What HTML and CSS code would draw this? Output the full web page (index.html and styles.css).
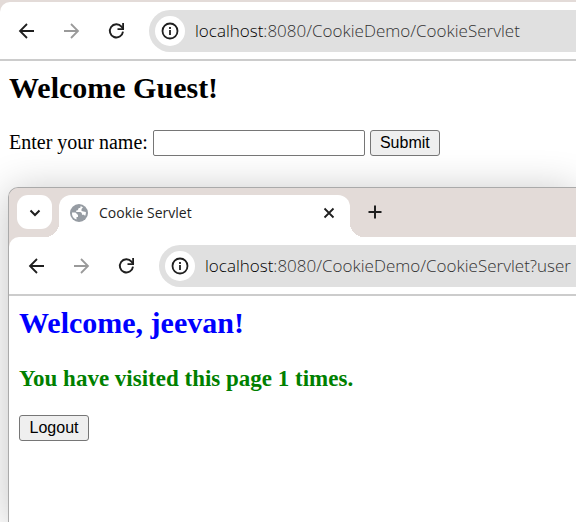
FILE: index.html
```html
<!DOCTYPE html>
<html lang="en">
<head>
<meta charset="utf-8">
<title>Cookie Servlet</title>
<link rel="stylesheet" href="styles.css">
</head>
<body>
<svg class="sprite" aria-hidden="true">
  <symbol id="back" viewBox="0 0 18 18"><path d="M16 9H2M9 2L2 9l7 7" fill="none" stroke="currentColor" stroke-width="1.800"/></symbol>
  <symbol id="forward" viewBox="0 0 18 18"><path d="M1 9h14M8 2l7 7-7 7" fill="none" stroke="currentColor" stroke-width="1.800"/></symbol>
  <symbol id="reload" viewBox="0 0 18 18"><path d="M15 9.700A6.600 6.600 0 1 1 13.500 4.600L15.500 7" fill="none" stroke="currentColor" stroke-width="1.900"/><path d="M16 1v7H9.500V6.200H14.200V1z" fill="currentColor"/></symbol>
  <symbol id="info" viewBox="0 0 18 18"><circle cx="9" cy="9" r="7.500" fill="none" stroke="currentColor" stroke-width="1.800"/><path d="M9 8v5M9 5v2" fill="none" stroke="currentColor" stroke-width="1.800"/></symbol>
</svg>
<div class="desktop">
  <section class="window">
    <header class="toolbar">
      <button class="tool" aria-label="Back"><svg><use href="#back"/></svg></button>
      <button class="tool muted" aria-label="Forward"><svg><use href="#forward"/></svg></button>
      <button class="tool" aria-label="Reload"><svg><use href="#reload"/></svg></button>
      <div class="address">
        <button class="site-info" aria-label="Site information"><svg><use href="#info"/></svg></button>
        <span class="url"><span class="host">localhost</span>:8080/CookieDemo/CookieServlet</span>
      </div>
    </header>
    <main class="page">
      <h2>Welcome Guest!</h2>
      <form class="name-form">
        <label for="name">Enter your name:</label>
        <input id="name" type="text">
        <button class="button" type="button">Submit</button>
      </form>
    </main>
  </section>

  <section class="window front">
    <div class="tabs">
      <button class="tab-search" aria-label="Search tabs"><svg viewBox="0 0 12 12"><path d="M1.500 3.500L6 8l4.500-4.500" fill="none" stroke="currentColor" stroke-width="2"/></svg></button>
      <div class="tab">
        <svg class="globe" viewBox="0 0 18 18"><circle cx="9" cy="9" r="9" fill="#969ca3"/><path d="M10.500 2c.5 1.500-.5 2.200-2 2.200-.2 1.800-.8 2.300-2.300 2.300V8H10c1.500 0 2 1 2 2.800h1.200c1 0 1.500.5 1.800 1.400A7 7 0 0 0 15.900 8L13.500 7.500 11.500 7V5L13 3.200zM2 8.500h3.500L8 11v2H6.500v2.600A7 7 0 0 1 2 8.500z" fill="#fff"/></svg>
        <span class="tab-title">Cookie Servlet</span>
        <button class="close" aria-label="Close tab"><svg viewBox="0 0 12 12"><path d="M1.500 1.500l9 9M10.500 1.500l-9 9" fill="none" stroke="currentColor" stroke-width="1.800"/></svg></button>
      </div>
      <button class="new-tab" aria-label="New tab"><svg viewBox="0 0 14 14"><path d="M7 0.500v13M0.500 7h13" fill="none" stroke="currentColor" stroke-width="2"/></svg></button>
    </div>
    <header class="toolbar">
      <button class="tool" aria-label="Back"><svg><use href="#back"/></svg></button>
      <button class="tool muted" aria-label="Forward"><svg><use href="#forward"/></svg></button>
      <button class="tool" aria-label="Reload"><svg><use href="#reload"/></svg></button>
      <div class="address">
        <button class="site-info" aria-label="Site information"><svg><use href="#info"/></svg></button>
        <span class="url"><span class="host">localhost</span>:8080/CookieDemo/CookieServlet?user</span>
      </div>
    </header>
    <main class="page">
      <h2 class="welcome">Welcome, jeevan!</h2>
      <h3>You have visited this page 1 times.</h3>
      <button class="button" type="button">Logout</button>
    </main>
  </section>
</div>
</body>
</html>
```

FILE: styles.css
```css
* { box-sizing: border-box; }

body {
  margin: 0;
  background: #fff;
  font-family: "Liberation Serif", "Times New Roman", serif;
  font-size: 20px;
  color: #000;
}

button { font: inherit; color: inherit; }

.sprite { display: none; }

.desktop {
  display: flex;
  flex-direction: column;
  min-height: 100vh;
  padding-top: 2px;
  background: linear-gradient(#e3dbd8 20px, #fff 20px);
  overflow: hidden;
}

.window {
  background: #fff;
  border-top-left-radius: 10px;
}

.toolbar {
  display: flex;
  align-items: center;
  height: 59px;
  padding-left: 18px;
  border-bottom: 2px solid #ccc;
  color: #1f1f1f;
}

.tool {
  display: flex;
  width: 18px;
  height: 18px;
  margin-right: 27px;
  padding: 0;
  border: 0;
  background: none;
}

.tool svg,
.site-info svg { width: 18px; height: 18px; }

.muted { color: #9a9a9a; }

.address {
  display: flex;
  flex: 1;
  align-items: center;
  gap: 10px;
  min-width: 0;
  height: 42px;
  margin-left: -4px;
  padding-left: 6px;
  border-radius: 21px 0 0 21px;
  background: #e0e0e0;
  overflow: hidden;
}

.site-info {
  display: flex;
  flex: none;
  align-items: center;
  justify-content: center;
  width: 30px;
  height: 30px;
  padding: 0;
  border: 0;
  border-radius: 50%;
  background: #fff;
}

.url {
  font-family: "Open Sans", sans-serif;
  font-size: 17px;
  font-weight: 300;
  color: #333;
  white-space: nowrap;
}

.host { color: #000; }

.page { padding: 10px 9px; }

h2 {
  margin: 0;
  font-size: 30px;
  line-height: 34px;
}

.name-form {
  display: flex;
  align-items: center;
  gap: 5px;
  margin: 25px 0 21px;
}

.name-form label { line-height: 20px; padding-bottom: 2px; }

.name-form input {
  width: 212px;
  height: 26px;
  padding: 1px 2px;
  border: 1px solid #767676;
  border-radius: 2px;
  font: 16px "Liberation Sans", Arial, sans-serif;
}

.button {
  min-width: 70px;
  height: 26px;
  padding: 0 9px;
  border: 1px solid #767676;
  border-radius: 3px;
  background: #efefef;
  font: 16px "Liberation Sans", Arial, sans-serif;
}

.front {
  flex: 1;
  margin-left: 8px;
  border: 1px solid #aaa;
  border-width: 1px 0 0 1px;
  border-radius: 10px 0 0 0;
  background: linear-gradient(#e3dbd8 70px, #fff 70px);
  box-shadow: 0 4px 40px rgba(0, 0, 0, 0.24);
}

.tabs {
  display: flex;
  height: 49px;
  padding: 7px 0 0 8px;
  border-top-left-radius: 9px;
  background: #e3dbd8;
  color: #1f1f1f;
}

.tab-search {
  width: 35px;
  height: 34px;
  padding: 0;
  border: 0;
  border-radius: 11px;
  background: #fff;
}

.tab-search svg { width: 12px; height: 12px; }

.tab {
  position: relative;
  display: flex;
  align-items: center;
  width: 291px;
  margin-left: 7px;
  padding: 0 15px 7px 11px;
  border-radius: 12px 12px 0 0;
  background: #fff;
}

.tab::before,
.tab::after {
  content: "";
  position: absolute;
  bottom: 0;
  width: 14px;
  height: 14px;
}

.tab::before {
  right: 100%;
  background: radial-gradient(circle at 0 0, transparent 14px, #fff 14px);
}

.tab::after {
  left: 100%;
  background: radial-gradient(circle at 100% 0, transparent 14px, #fff 14px);
}

.globe { width: 18px; height: 18px; }

.tab-title {
  margin: 0 auto 0 11px;
  font-family: "Open Sans", sans-serif;
  font-size: 14px;
}

.close,
.new-tab {
  display: flex;
  padding: 0;
  border: 0;
  background: none;
}

.close svg { width: 12px; height: 12px; }

.new-tab {
  align-self: flex-start;
  margin: 10px 0 0 18px;
}

.new-tab svg { width: 14px; height: 14px; }

.front .toolbar {
  padding-left: 19px;
  border-top-left-radius: 10px;
  background: #fff;
}

.front .page { padding-left: 10px; }

.welcome { color: #00f; }

h3 {
  margin: 25px 0 22px;
  font-size: 23px;
  line-height: 28px;
  color: #008000;
}
```
